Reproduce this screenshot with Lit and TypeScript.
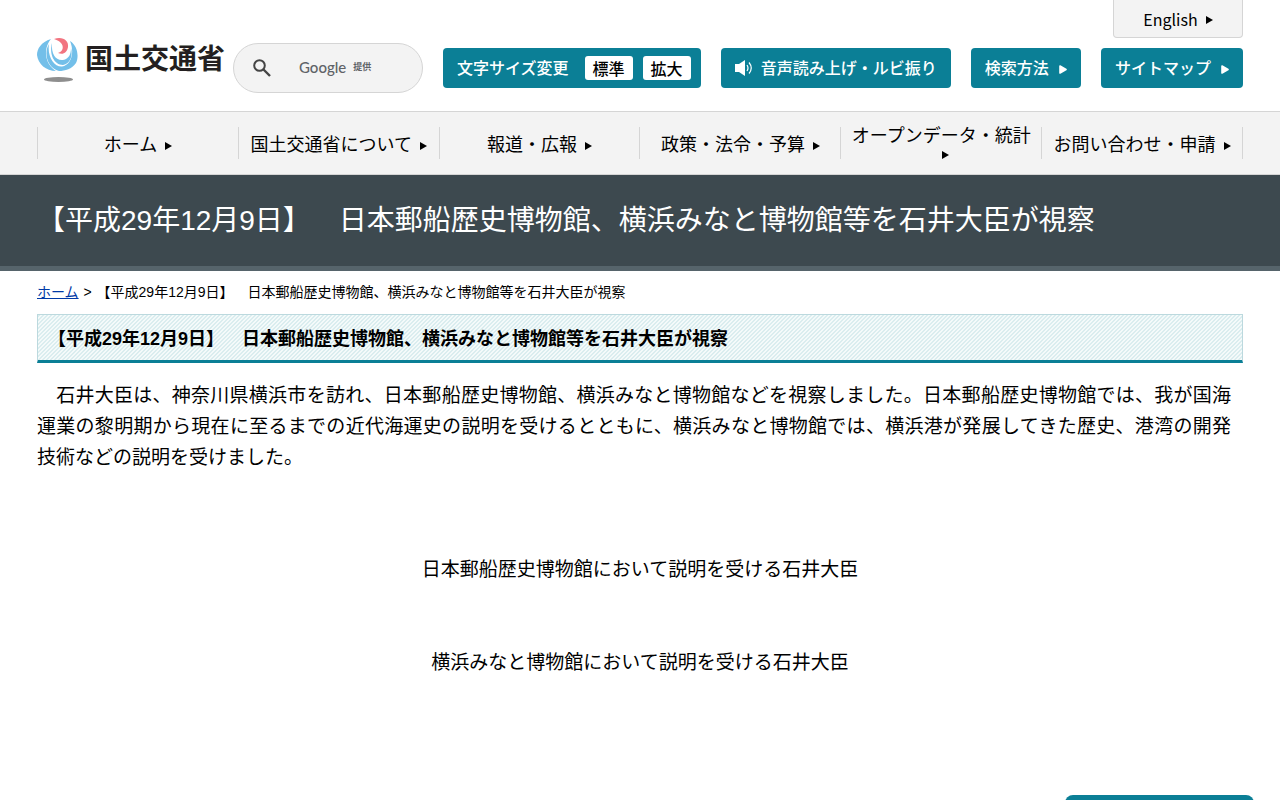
import { LitElement, html, css } from "lit";
import { customElement } from "lit/decorators.js";

const NAV = ["ホーム", "国土交通省について", "報道・広報", "政策・法令・予算", "オープンデータ・統計", "お問い合わせ・申請"];
const TITLE = "【平成29年12月9日】　日本郵船歴史博物館、横浜みなと博物館等を石井大臣が視察";

const arrow = html`<svg class="arrow" viewBox="0 0 7 8" aria-hidden="true"><path d="M0 0L7 4L0 8Z" fill="currentColor"/></svg>`;
const roundArrow = html`<svg class="arrow big" viewBox="0 0 8 9" aria-hidden="true"><path d="M1 1L7 4.5L1 8Z" fill="currentColor" stroke="currentColor" stroke-width="1.6" stroke-linejoin="round"/></svg>`;

@customElement("app-root")
export class AppRoot extends LitElement {
  static styles = css`
    :host {
      display: block;
      color: #000;
      background: #fff;
      font-family: "Liberation Sans", "Noto Sans CJK JP", sans-serif;
      text-spacing-trim: space-all;
    }
    * { box-sizing: border-box; }
    a { color: inherit; text-decoration: none; }
    h1, h2, p, ul { margin: 0; padding: 0; }
    header, nav { font-family: "Noto Sans CJK JP", sans-serif; }
    .wrap { padding: 0 37px; }
    header { display: grid; grid-template-columns: auto 1fr; min-height: 111px; }
    .brand { display: flex; align-items: flex-start; padding-top: 36px; width: 196px; }
    .mark { width: 41px; height: 48px; margin-right: 7px; flex: none; }
    .name { font-size: 28px; line-height: 42px; font-weight: 700; color: #231f20; white-space: nowrap; }
    .side { display: flex; flex-direction: column; align-items: flex-end; }
    .english {
      width: 130px; height: 38px; flex: none;
      display: flex; align-items: center; justify-content: center; gap: 8px;
      border: 1px solid #d5d5d5; border-top: 0; border-radius: 0 0 4px 4px;
      background: #f3f3f3; font-size: 16px; line-height: 36px;
    }
    .english .arrow { margin-top: 2px; }
    .tools { display: flex; align-items: center; justify-content: space-between; width: 100%; margin-top: 5px; }
    .search {
      display: flex; align-items: center; width: 190px; height: 50px; padding-left: 19px;
      border: 1px solid #d5d5d5; border-radius: 25px; background: #f3f3f3; position: relative;
    }
    .go { border: 0; padding: 0; background: none; width: 18px; height: 18px; display: block; }
    .go svg { display: block; }
    .query { width: 120px; height: 30px; border: 0; background: none; outline: 0; margin-left: 8px; }
    .by {
      position: absolute; left: 65px; top: 9px; pointer-events: none;
      display: flex; align-items: center; gap: 7px; color: #5f6368;
      font-size: 9px; line-height: 28px; font-weight: 700;
    }
    .g { font-family: Lato, sans-serif; font-size: 15px; font-weight: 500; }
    .btn {
      display: flex; align-items: center; height: 40px; padding: 0 14px 2px;
      background: #0b7f96; color: #fff; border: 0; border-radius: 4px;
      font: 500 16px/38px "Noto Sans CJK JP", sans-serif; white-space: nowrap;
    }
    .size { padding: 0 10px 0 14px; }
    .size button {
      width: 48px; height: 24px; margin-left: 10px; padding: 0; border: 0; border-radius: 3px;
      background: #fff; color: #000; font: 500 16px/24px "Noto Sans CJK JP", sans-serif;
    }
    .size span { margin-right: 6px; padding-bottom: 2px; }
    .speaker { width: 18px; height: 16px; margin: 2px 8px 0 0; }
    .arrow { width: 7px; height: 8px; flex: none; }
    .arrow.big { width: 8px; height: 9px; margin: 4px 0 0 10px; }
    nav { background: #f3f3f3; border-top: 1px solid #d5d5d5; border-bottom: 1px solid #d5d5d5; }
    nav ul {
      display: grid; grid-template-columns: repeat(6, 1fr); grid-auto-rows: 32px;
      list-style: none; border-left: 1px solid #d5d5d5; margin: 15px 0;
    }
    nav li { display: flex; align-items: center; justify-content: center; border-right: 1px solid #d5d5d5; }
    nav a { font-size: 18px; line-height: 18px; text-align: center; padding: 0 4px; }
    nav .arrow { margin-left: 8px; vertical-align: 1px; }
    .hero { background: #3d494f; border-bottom: 5px solid #56646b; color: #fff; padding: 23px 37px; }
    h1 { font-size: 28px; line-height: 45px; font-weight: 400; }
    .crumbs { font-size: 14px; line-height: 21px; padding: 11px 0; }
    .crumbs a { color: #0039a6; text-decoration: underline; }
    .sep { padding: 0 1px; }
    h2 {
      font-size: 18px; line-height: 27px; font-weight: 700; padding: 11px 10px 7px;
      border: 1px solid #bcd9de; border-bottom: 3px solid #0b7f96;
      background: linear-gradient(135deg, #daedef 0 35%, #f4fafa 35% 50%, #daedef 50% 85%, #f4fafa 85%) 0 0 / 4px 4px;
    }
    .body { font-size: 19px; line-height: 31px; padding-top: 17px; }
    .lead { padding-right: 12px; text-align: justify; }
    .cap { text-align: center; padding-top: 81px; }
    .cap + .cap { padding-top: 62px; }
    .top {
      position: fixed; right: 26px; top: calc(100vh - 5px); width: 189px; height: 48px;
      border-radius: 8px; background: #0b7f96;
    }
  `;

  render() {
    return html`
      <header class="wrap">
        <a class="brand" href="#">
          <svg class="mark" viewBox="0 0 41 48" aria-hidden="true">
            <g fill="#73bfe9">
              <path d="M14 3C4 6 0 13 0 19C1 28 9 35 19 35C9 29 5 14 14 3Z"/>
              <path d="M12 8C10 20 17 31 25 30.5C34 29 38 17 33 5C41 10 42 21 39 27C35 33 28 35 22 35C11 32 6 18 12 8Z"/>
              <path d="M15 7C14 18 19 25 26 24C32 23 34 18 34 12C36 20 33 28 26 29C17 29 12 18 15 7Z"/>
            </g>
            <path d="M17 3C26 0 32 5 31 11C30 17 26 19 21 17C28 15 28 6 17 3Z" fill="#f27480"/>
            <ellipse cx="21.5" cy="43.5" rx="14.5" ry="2.4" fill="#8e8e8e"/>
          </svg>
          <span class="name">国土交通省</span>
        </a>
        <div class="side">
          <a class="english" href="#">English ${arrow}</a>
          <div class="tools">
            <form class="search" role="search">
              <button class="go" type="button" aria-label="検索">
                <svg width="18" height="18" viewBox="0 0 18 18"><circle cx="6.5" cy="6.5" r="5.3" fill="none" stroke="#444" stroke-width="2"/><path d="M10.5 10.5L17 17" stroke="#444" stroke-width="2.4"/></svg>
              </button>
              <input class="query" type="text" aria-label="サイト内検索">
              <span class="by"><span class="g">Google</span>提供</span>
            </form>
            <div class="btn size"><span>文字サイズ変更</span><button type="button">標準</button><button type="button">拡大</button></div>
            <button class="btn" type="button">
              <svg class="speaker" viewBox="0 0 18 16" aria-hidden="true"><path d="M0 4H4L10 0V16L4 12H0Z" fill="#fff"/><path d="M12 5Q14 8 12 11M14 2.5Q18.5 8 14 13.5" fill="none" stroke="#fff" stroke-width="1.2"/></svg>音声読み上げ・ルビ振り</button>
            <a class="btn" href="#">検索方法${roundArrow}</a>
            <a class="btn" href="#">サイトマップ${roundArrow}</a>
          </div>
        </div>
      </header>
      <nav class="wrap"><ul>${NAV.map((t) => html`<li><a href="#">${t}<wbr>${arrow}</a></li>`)}</ul></nav>
      <div class="hero"><h1>${TITLE}</h1></div>
      <main class="wrap">
        <div class="crumbs"><a href="#">ホーム</a> <span class="sep">&gt;</span> ${TITLE}</div>
        <h2>${TITLE}</h2>
        <div class="body">
          <p class="lead">　石井大臣は、神奈川県横浜市を訪れ、日本郵船歴史博物館、横浜みなと博物館などを視察しました。日本郵船歴史博物館では、我が国海運業の黎明期から現在に至るまでの近代海運史の説明を受けるとともに、横浜みなと博物館では、横浜港が発展してきた歴史、港湾の開発技術などの説明を受けました。</p>
          <p class="cap">日本郵船歴史博物館において説明を受ける石井大臣</p>
          <p class="cap">横浜みなと博物館において説明を受ける石井大臣</p>
        </div>
      </main>
      <a class="top" href="#" aria-label="ページの先頭へ"></a>
    `;
  }
}
